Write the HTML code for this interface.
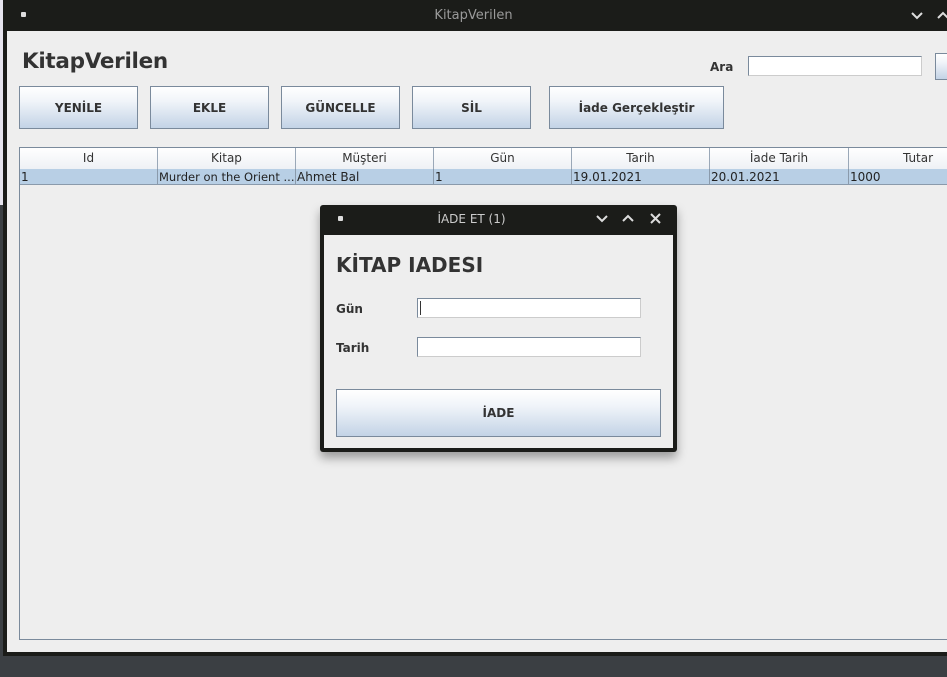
<!DOCTYPE html>
<html><head><meta charset="utf-8"><style>
*{box-sizing:border-box;margin:0;padding:0}
body{width:947px;height:677px;overflow:hidden;background:#3b3f43;font-family:"DejaVu Sans","Liberation Sans",sans-serif;position:relative}
.abs{position:absolute}
.btn{position:absolute;border:1px solid #7a8a9c;background:linear-gradient(#fff 0%,#f0f4f9 35%,#c3d3e6 100%);font-weight:bold;font-size:12px;color:#333;display:flex;align-items:center;justify-content:center}
.inp{position:absolute;background:#fff;border:1px solid #7a8a9c;border-right-color:#ccc;border-bottom-color:#ccc}
.hc{position:absolute;top:0;height:21px;border-right:1px solid #9aa8b8;font-size:12px;color:#333;text-align:center;line-height:21px;background:linear-gradient(#fff,#eef1f5)}
.rc{position:absolute;top:21px;height:16px;border-right:1px solid #8a9aab;font-size:12px;color:#222;line-height:16px;padding-left:1px;white-space:nowrap;overflow:hidden}
</style></head><body>
<div class="abs" style="left:0;top:0;width:3px;height:205px;background:#e6e4ee"></div>
<div class="abs" style="left:3px;top:0;width:944px;height:656px;background:#1b1c19"></div>
<div class="abs" style="left:21px;top:12px;width:5px;height:5px;border-radius:1px;background:#ddd"></div>
<div class="abs" style="left:0;top:8px;width:947px;text-align:center;font-size:13px;color:#9a9a9a">KitapVerilen</div>
<svg class="abs" style="left:910px;top:10px" width="37" height="12"><path d="M2 3l5 5 5-5" stroke="#ddd" stroke-width="2" fill="none"/><path d="M28 8l5-5 5 5" stroke="#ddd" stroke-width="2" fill="none"/></svg>
<div class="abs" style="left:7px;top:31px;width:940px;height:621px;background:#eeeeee"></div>
<div class="abs" style="left:22px;top:49px;font-size:21.5px;font-weight:bold;color:#333;letter-spacing:-0.3px">KitapVerilen</div>
<div class="abs" style="left:710px;top:60px;font-size:12px;font-weight:bold;color:#333">Ara</div>
<div class="inp" style="left:748px;top:56px;width:174px;height:20px"></div>
<div class="btn" style="left:935px;top:53px;width:20px;height:27px"></div>
<div class="btn" style="left:19px;top:86px;width:119px;height:43px">YENİLE</div>
<div class="btn" style="left:150px;top:86px;width:119px;height:43px">EKLE</div>
<div class="btn" style="left:281px;top:86px;width:119px;height:43px">GÜNCELLE</div>
<div class="btn" style="left:412px;top:86px;width:119px;height:43px">SİL</div>
<div class="btn" style="left:549px;top:86px;width:175px;height:43px">İade Gerçekleştir</div>
<div class="abs" style="left:19px;top:147px;width:940px;height:493px;border:1px solid #7a8a9c;border-right:none;background:#eee">
 <div class="abs" style="left:0;top:21px;width:940px;height:16px;background:#b8cfe5"></div>
 <div class="abs" style="left:0;top:20px;width:940px;height:1px;background:#8a9aab"></div>
 <div class="abs" style="left:0;top:36px;width:940px;height:1px;background:#8a9aab"></div>
 <div class="hc" style="left:0;width:138px">Id</div>
 <div class="hc" style="left:138px;width:138px">Kitap</div>
 <div class="hc" style="left:276px;width:138px">Müşteri</div>
 <div class="hc" style="left:414px;width:138px">Gün</div>
 <div class="hc" style="left:552px;width:138px">Tarih</div>
 <div class="hc" style="left:690px;width:139px">İade Tarih</div>
 <div class="hc" style="left:829px;width:139px">Tutar</div>
 <div class="rc" style="left:0;width:138px">1</div>
 <div class="rc" style="left:138px;width:138px;font-size:11.5px">Murder on the Orient ...</div>
 <div class="rc" style="left:276px;width:138px">Ahmet Bal</div>
 <div class="rc" style="left:414px;width:138px">1</div>
 <div class="rc" style="left:552px;width:138px">19.01.2021</div>
 <div class="rc" style="left:690px;width:139px">20.01.2021</div>
 <div class="rc" style="left:829px;width:139px">1000</div>
</div>
<div class="abs" style="left:320px;top:205px;width:357px;height:247px;background:#1b1c19;border-radius:3px;box-shadow:0 6px 10px rgba(0,0,0,.35)"></div>
<div class="abs" style="left:338px;top:216px;width:5px;height:5px;border-radius:1px;background:#ddd"></div>
<div class="abs" style="left:320px;top:212px;width:303px;text-align:center;font-size:12px;color:#ccc">İADE ET (1)</div>
<svg class="abs" style="left:595px;top:213px" width="70" height="12"><path d="M2 3l5 5 5-5" stroke="#ddd" stroke-width="2" fill="none"/><path d="M28 8l5-5 5 5" stroke="#ddd" stroke-width="2" fill="none"/><path d="M56 1l9 9M65 1l-9 9" stroke="#ddd" stroke-width="2"/></svg>
<div class="abs" style="left:324px;top:235px;width:349px;height:213px;background:#eeeeee"></div>
<div class="abs" style="left:336px;top:253px;font-size:20px;font-weight:bold;color:#333">KİTAP IADESI</div>
<div class="abs" style="left:336px;top:302px;font-size:12px;font-weight:bold;color:#333">Gün</div>
<div class="abs" style="left:336px;top:341px;font-size:12px;font-weight:bold;color:#333">Tarih</div>
<div class="inp" style="left:417px;top:298px;width:224px;height:20px"><div style="position:absolute;left:2px;top:2px;width:1px;height:14px;background:#333"></div></div>
<div class="inp" style="left:417px;top:337px;width:224px;height:20px"></div>
<div class="btn" style="left:336px;top:389px;width:325px;height:48px">İADE</div>
</body></html>
